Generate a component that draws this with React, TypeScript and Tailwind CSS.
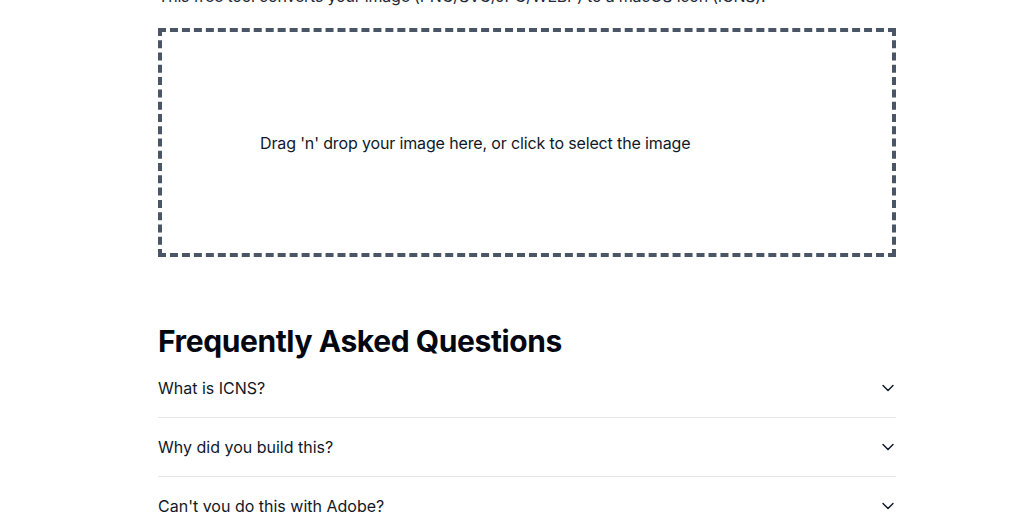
import React from "react";
import { ChevronDown } from "lucide-react";

const faqs = ["What is ICNS?", "Why did you build this?", "Can't you do this with Adobe?", "Is it free?"];

export default function App() {
  return (
    <div className="h-[512px] overflow-hidden bg-white text-gray-900" style={{ fontFamily: "Inter, 'Noto Sans', sans-serif" }}>
      <div className="ml-[158px] w-[738px] -mt-[16px]">
        <p className="text-base leading-6 tracking-[-0.2px] text-gray-800">
          This free tool converts your image (PNG/SVG/JPG/WEBP) to a macOS icon (ICNS).
        </p>
        <div className="mt-5 flex h-[229px] items-center border-4 border-dashed border-gray-600 pl-[98px]">
          <p className="text-base leading-6 tracking-[-0.14px] text-gray-900">Drag 'n' drop your image here, or click to select the image</p>
        </div>
        <h2 className="mt-[66px] text-3xl leading-9 font-bold tracking-[-0.4px] text-gray-950">Frequently Asked Questions</h2>
        <div>
          {faqs.map((q) => (
            <div key={q} className="flex items-center justify-between border-b border-gray-200 py-[17px]">
              <span className="text-base leading-6">{q}</span>
              <ChevronDown size={20} strokeWidth={1.75} className="-mr-[2px] text-gray-900" />
            </div>
          ))}
        </div>
      </div>
    </div>
  );
}
